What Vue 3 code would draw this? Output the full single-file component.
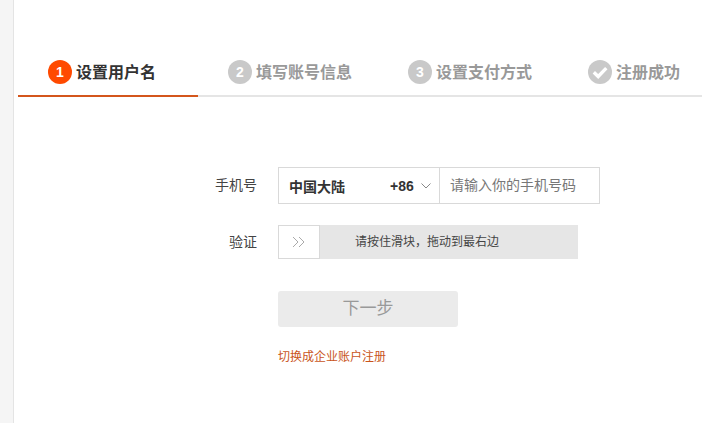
<script setup>
const steps = [
  { mark: '1', label: '设置用户名', active: true },
  { mark: '2', label: '填写账号信息' },
  { mark: '3', label: '设置支付方式' },
  { check: true, label: '注册成功' }
]
</script>

<template>
  <div class="page">
    <div class="panel">
      <nav class="steps">
        <div v-for="s in steps" :key="s.label" class="step" :class="{ active: s.active }">
          <span class="mark">
            <svg v-if="s.check" width="18" height="18" viewBox="0 0 16 16">
              <path d="M2.500 8.200 6.400 12 13.600 4.600" fill="none" stroke="#fff" stroke-width="3" />
            </svg>
            <template v-else>{{ s.mark }}</template>
          </span>
          <span class="label">{{ s.label }}</span>
        </div>
      </nav>
      <form class="form" @submit.prevent>
        <div class="row phone-row">
          <span class="field-label">手机号</span>
          <div class="region">
            <b class="region-name">中国大陆</b>
            <b class="code">+86</b>
            <svg class="chev" width="10" height="6" viewBox="0 0 10 6">
              <path d="M.5.5 5 5 9.500.5" fill="none" stroke="#888" stroke-width="1" />
            </svg>
          </div>
          <div class="phone">请输入你的手机号码</div>
        </div>
        <div class="row slider-row">
          <span class="field-label">验证</span>
          <div class="slider">
            <div class="knob">
              <svg width="14" height="12" viewBox="0 0 14 12">
                <path d="M1 1 6 6 1 11M7 1 12 6 7 11" fill="none" stroke="#aaa" stroke-width="1" />
              </svg>
            </div>
            <div class="hint">请按住滑块，拖动到最右边</div>
          </div>
        </div>
        <div class="next">下一步</div>
        <a class="switch">切换成企业账户注册</a>
      </form>
    </div>
  </div>
</template>

<style>
html, body { margin: 0; background: #fff; }
</style>

<style scoped>
.page {
  width: 702px;
  height: 423px;
  overflow: hidden;
  background: #f5f5f5;
  padding-left: 13px;
  box-sizing: border-box;
  font-family: "Liberation Sans", "Noto Sans CJK SC", sans-serif;
}
.panel {
  height: 100%;
  background: #fff;
  border-left: 1px solid #e4e4e4;
  padding-left: 4px;
  padding-top: 46px;
  box-sizing: border-box;
}
.steps {
  display: flex;
  align-items: flex-start;
  height: 49px;
  border-bottom: 2px solid #e5e5e5;
}
.step {
  flex: none;
  width: 180px;
  height: 51px;
  display: flex;
  align-items: center;
  gap: 4px;
  padding: 3px 0 0 30px;
  box-sizing: border-box;
  border-bottom: 2px solid transparent;
  color: #999;
  font-size: 16px;
  font-weight: 700;
}
.step.active {
  color: #333;
  border-bottom-color: #d4561c;
}
.label { padding-bottom: 2px; }
.mark {
  width: 24px;
  height: 24px;
  border-radius: 50%;
  background: #c9c9c9;
  color: #fff;
  font-size: 14px;
  display: flex;
  align-items: center;
  justify-content: center;
}
.active .mark { background: #ff4a00; }
.form {
  padding-top: 70px;
  display: flex;
  flex-direction: column;
  padding-left: 260px;
}
.row {
  display: flex;
  position: relative;
}
.field-label {
  position: absolute;
  left: -71px;
  width: 50px;
  text-align: right;
  font-size: 14px;
  color: #444;
}
.phone-row { height: 37px; }
.phone-row .field-label { line-height: 36px; }
.region {
  width: 162px;
  height: 37px;
  box-sizing: border-box;
  border: 1px solid #d9d9d9;
  display: flex;
  align-items: center;
  padding-left: 10px;
  font-size: 14px;
  color: #333;
}
.region-name { width: 100px; }
.code { width: 32px; font-size: 14px; padding-left: 1px; box-sizing: border-box; }
.phone {
  width: 160px;
  height: 37px;
  box-sizing: border-box;
  border: 1px solid #d9d9d9;
  border-left: 0;
  padding-left: 10px;
  font-size: 14px;
  line-height: 35px;
  color: #777;
}
.slider-row { margin-top: 21px; height: 34px; }
.slider-row .field-label { line-height: 34px; }
.slider {
  width: 300px;
  height: 34px;
  display: flex;
  background: #e6e6e6;
}
.knob {
  width: 42px;
  height: 34px;
  box-sizing: border-box;
  border: 1px solid #d9d9d9;
  background: #fff;
  display: flex;
  align-items: center;
  justify-content: center;
}
.hint {
  flex: 1;
  text-align: center;
  font-size: 12px;
  line-height: 34px;
  color: #444;
  padding-right: 44px;
  box-sizing: border-box;
}
.next {
  margin-top: 32px;
  width: 180px;
  height: 36px;
  border-radius: 3px;
  background: #ebebeb;
  color: #999;
  font-size: 17px;
  line-height: 36px;
  text-align: center;
}
.switch {
  margin-top: 22px;
  font-size: 12px;
  line-height: 16px;
  color: #c9541a;
}
</style>
